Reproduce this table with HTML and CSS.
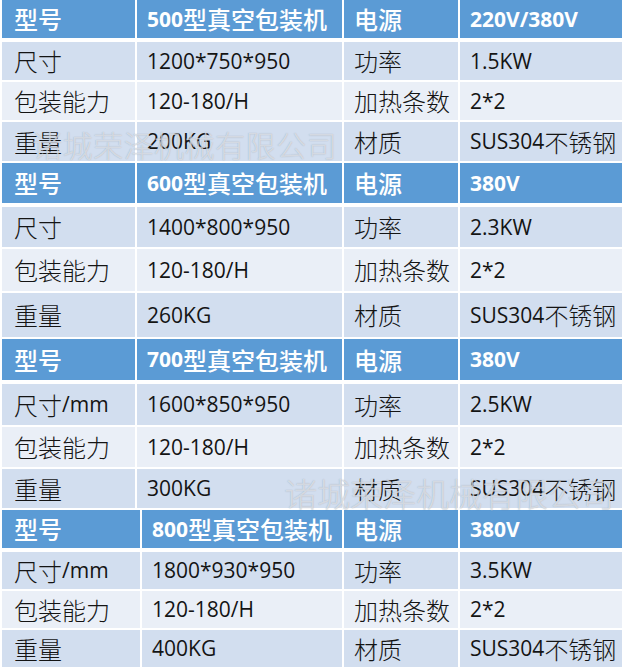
FILE: index.html
```html
<!DOCTYPE html>
<html lang="zh-CN">
<head>
<meta charset="utf-8">
<title>真空包装机参数</title>
<link rel="stylesheet" href="styles.css">
</head>
<body>
<div class="page">
  <section class="tbl t1">
    <div class="row head"><div class="c">型号</div><div class="c"><span class="en">500</span>型真空包装机</div><div class="c">电源</div><div class="c"><span class="en">220V/380V</span></div></div>
    <div class="row b1"><div class="c">尺寸</div><div class="c"><span class="en">1200*750*950</span></div><div class="c">功率</div><div class="c"><span class="en">1.5KW</span></div></div>
    <div class="row b2"><div class="c">包装能力</div><div class="c"><span class="en">120-180/H</span></div><div class="c">加热条数</div><div class="c"><span class="en">2*2</span></div></div>
    <div class="row b1"><div class="c">重量</div><div class="c"><span class="en">200KG</span></div><div class="c">材质</div><div class="c"><span class="en">SUS304</span>不锈钢</div></div>
  </section>
  <section class="tbl t2">
    <div class="row head"><div class="c">型号</div><div class="c"><span class="en">600</span>型真空包装机</div><div class="c">电源</div><div class="c"><span class="en">380V</span></div></div>
    <div class="row b1"><div class="c">尺寸</div><div class="c"><span class="en">1400*800*950</span></div><div class="c">功率</div><div class="c"><span class="en">2.3KW</span></div></div>
    <div class="row b2"><div class="c">包装能力</div><div class="c"><span class="en">120-180/H</span></div><div class="c">加热条数</div><div class="c"><span class="en">2*2</span></div></div>
    <div class="row b1"><div class="c">重量</div><div class="c"><span class="en">260KG</span></div><div class="c">材质</div><div class="c"><span class="en">SUS304</span>不锈钢</div></div>
  </section>
  <section class="tbl t3">
    <div class="row head"><div class="c">型号</div><div class="c"><span class="en">700</span>型真空包装机</div><div class="c">电源</div><div class="c"><span class="en">380V</span></div></div>
    <div class="row b1"><div class="c">尺寸<span class="en">/mm</span></div><div class="c"><span class="en">1600*850*950</span></div><div class="c">功率</div><div class="c"><span class="en">2.5KW</span></div></div>
    <div class="row b2"><div class="c">包装能力</div><div class="c"><span class="en">120-180/H</span></div><div class="c">加热条数</div><div class="c"><span class="en">2*2</span></div></div>
    <div class="row b1"><div class="c">重量</div><div class="c"><span class="en">300KG</span></div><div class="c">材质</div><div class="c"><span class="en">SUS304</span>不锈钢</div></div>
  </section>
  <section class="tbl t4">
    <div class="row head"><div class="c">型号</div><div class="c"><span class="en">800</span>型真空包装机</div><div class="c">电源</div><div class="c"><span class="en">380V</span></div></div>
    <div class="row b1"><div class="c">尺寸<span class="en">/mm</span></div><div class="c"><span class="en">1800*930*950</span></div><div class="c">功率</div><div class="c"><span class="en">3.5KW</span></div></div>
    <div class="row b2"><div class="c">包装能力</div><div class="c"><span class="en">120-180/H</span></div><div class="c">加热条数</div><div class="c"><span class="en">2*2</span></div></div>
    <div class="row b1"><div class="c">重量</div><div class="c"><span class="en">400KG</span></div><div class="c">材质</div><div class="c"><span class="en">SUS304</span>不锈钢</div></div>
  </section>
  <div class="wm wm1">诸城荣泽机械有限公司</div>
  <div class="wm wm2">诸城荣泽机械有限公司</div>
</div>
</body>
</html>
```
FILE: styles.css
```css
html, body {
  margin: 0;
  padding: 0;
  background: #ffffff;
}
.page {
  position: relative;
  width: 624px;
  height: 667px;
  overflow: hidden;
  display: flex;
  flex-direction: column;
  gap: 2px;
  font-family: "Noto Sans CJK SC", sans-serif;
  font-size: 24px;
  font-weight: 300;
  color: #141414;
}
.tbl {
  display: flex;
  flex-direction: column;
  gap: 2px;
  padding: 0 2px;
}
.row {
  display: grid;
  grid-template-columns: 133px 205px 114px 162px;
  column-gap: 2px;
}
.t4 .row {
  grid-template-columns: 138px 200px 114px 162px;
}
.c {
  display: flex;
  align-items: center;
  padding-left: 10px;
  white-space: nowrap;
  line-height: 1;
}
.row .c:first-child {
  padding-left: 12px;
}
.en {
  font-family: "Open Sans", "Liberation Sans", sans-serif;
  font-size: 21px;
  font-weight: 400;
}
.head {
  margin-bottom: 2px;
}
.head .c {
  background: #5b9bd5;
  color: #ffffff;
  font-weight: 500;
}
.head .en {
  font-weight: 700;
}
.b1 .c { background: #d2deef; }
.b2 .c { background: #eaeff7; }

.t1 .head { height: 38px; }
.t1 .row:nth-child(2) { height: 38px; }
.t1 .row:nth-child(3) { height: 38px; }
.t1 .row:nth-child(4) { height: 39px; }

.t2 .head { height: 40px; }
.t2 .row:nth-child(2) { height: 40px; }
.t2 .row:nth-child(3) { height: 42px; }
.t2 .row:nth-child(4) { height: 44px; }

.t3 .head { height: 41px; }
.t3 .row:nth-child(2) { height: 41px; }
.t3 .row:nth-child(3) { height: 40px; }
.t3 .row:nth-child(4) { height: 39px; }

.t4 .head { height: 38px; }
.t4 .row:nth-child(2) { height: 37px; }
.t4 .row:nth-child(3) { height: 37px; }
.t4 .row:nth-child(4) { height: 37px; }

.wm {
  position: absolute;
  white-space: nowrap;
  line-height: 1;
  font-weight: 300;
  color: rgba(246, 248, 251, 0.6);
  text-shadow: 0 0 1px rgba(110, 120, 135, 0.55);
}
.wm1 {
  left: 32px;
  top: 129px;
  font-size: 30px;
  letter-spacing: 0.5px;
}
.wm2 {
  left: 284px;
  top: 477px;
  font-size: 33px;
}
```
